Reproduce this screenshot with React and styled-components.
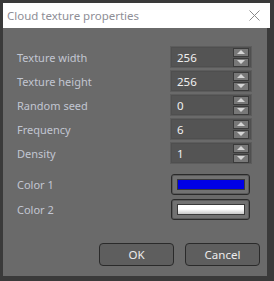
import React from 'react';
import styled, { createGlobalStyle } from 'styled-components';

const GlobalStyle = createGlobalStyle`
  html, body {
    margin: 0;
    padding: 0;
    background: #3a3a3a;
  }
  body {
    font-family: "Noto Sans", "Liberation Sans", sans-serif;
    font-size: 11px;
  }
`;

const Frame = styled.div`
  width: 274px;
  height: 281px;
  box-sizing: border-box;
  padding: 3px 4px 5px 3px;
  display: flex;
  flex-direction: column;
`;

const TitleBar = styled.div`
  height: 25px;
  background: #ffffff;
  display: flex;
  align-items: center;
  justify-content: space-between;
  padding: 0 10px 0 4px;
`;

const Title = styled.span`
  color: #8e8e96;
  font-size: 11.5px;
`;

const Close = styled.svg`
  width: 11px;
  height: 11px;
`;

const Body = styled.div`
  flex: 1;
  margin-right: 3px;
  background: #6a6a6a;
  display: flex;
  flex-direction: column;
  padding: 19px 7px 10px 14px;
`;

const Form = styled.div`
  display: grid;
  grid-template-columns: 1fr 80px;
  row-gap: 4px;
  align-items: center;
  padding-right: 9px;
`;

const Label = styled.div`
  color: #c2c6d2;
  padding-top: ${p => (p.$extra ? '7px' : '0')};
`;

const Spin = styled.div`
  height: 20px;
  box-sizing: border-box;
  border: 1px solid #4f4f4f;
  outline: 1px solid #5c5c5c;
  background: #545454;
  display: flex;
  align-items: center;
  justify-content: space-between;
  padding: 0 1px 0 5px;
`;

const Value = styled.span`
  color: #f0f0f0;
  font-size: 11.5px;
`;

const Arrows = styled.div`
  display: flex;
  flex-direction: column;
  gap: 1px;
`;

const Arrow = styled.div`
  width: 14px;
  height: 7px;
  border: 1px solid #3a3a3a;
  background: #787878;
  display: flex;
  align-items: center;
  justify-content: center;
  &::after {
    content: '';
    border-left: 4px solid transparent;
    border-right: 4px solid transparent;
    ${p => (p.$down
      ? 'border-top: 4px solid #d4d4d4;'
      : 'border-bottom: 4px solid #d4d4d4;')}
  }
`;

const ColorButton = styled.div`
  height: 21px;
  box-sizing: border-box;
  border: 1px solid #2a2a2a;
  border-radius: 3px;
  background: #727272;
  box-shadow: inset 0 0 0 1px #5a5a5a;
  padding: 4px 4px 4px 5px;
  margin-top: ${p => (p.$extra ? '7px' : '0')};
  margin-right: 1px;
`;

const Swatch = styled.div`
  height: 100%;
  box-sizing: border-box;
  border: 1px solid #3a3a3a;
  background: ${p => p.$fill};
`;

const Footer = styled.div`
  margin-top: auto;
  display: flex;
  justify-content: flex-end;
  gap: 11px;
`;

const Button = styled.button`
  width: 75px;
  height: 23px;
  box-sizing: border-box;
  border: 1px solid #2a2a2a;
  border-radius: 4px;
  background: #5e5e5e;
  color: #ececec;
  font-family: "Noto Sans", "Liberation Sans", sans-serif;
  font-size: 11.5px;
`;

const fields = [
  { label: 'Texture width', value: '256' },
  { label: 'Texture height', value: '256' },
  { label: 'Random seed', value: '0' },
  { label: 'Frequency', value: '6' },
  { label: 'Density', value: '1' },
];

const colors = [
  { label: 'Color 1', fill: '#0000e6' },
  { label: 'Color 2', fill: 'linear-gradient(#ffffff 0%, #ffffff 45%, #c8c8c8 100%)' },
];

export default function App() {
  return (
    <>
      <GlobalStyle />
      <Frame>
        <TitleBar>
          <Title>Cloud texture properties</Title>
          <Close viewBox="0 0 11 11">
            <path d="M0.5 0.5 L10.5 10.5 M10.5 0.5 L0.5 10.5" stroke="#8a8a8a" strokeWidth="1" fill="none" />
          </Close>
        </TitleBar>
        <Body>
          <Form>
            {fields.map(f => (
              <React.Fragment key={f.label}>
                <Label>{f.label}</Label>
                <Spin>
                  <Value>{f.value}</Value>
                  <Arrows>
                    <Arrow />
                    <Arrow $down />
                  </Arrows>
                </Spin>
              </React.Fragment>
            ))}
            {colors.map((c, i) => (
              <React.Fragment key={c.label}>
                <Label $extra={i === 0}>{c.label}</Label>
                <ColorButton $extra={i === 0}>
                  <Swatch $fill={c.fill} />
                </ColorButton>
              </React.Fragment>
            ))}
          </Form>
          <Footer>
            <Button>OK</Button>
            <Button>Cancel</Button>
          </Footer>
        </Body>
      </Frame>
    </>
  );
}
